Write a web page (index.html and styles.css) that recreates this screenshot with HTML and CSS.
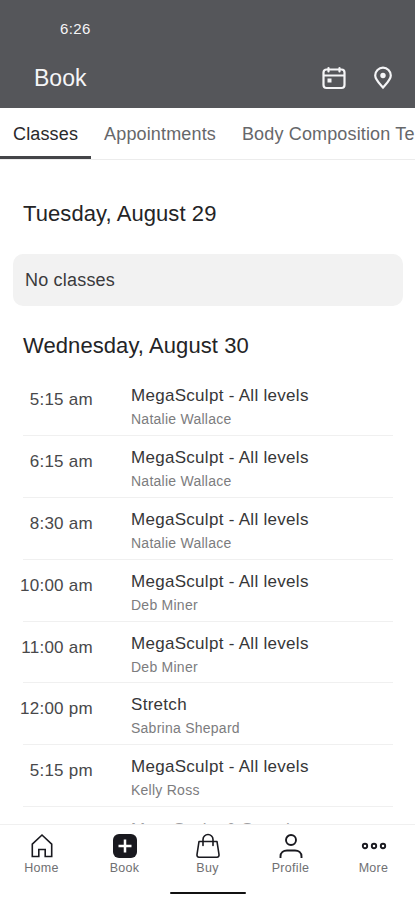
FILE: index.html
```html
<!DOCTYPE html>
<html lang="en">
<head>
  <meta charset="UTF-8" />
  <meta name="viewport" content="width=device-width, initial-scale=1.0"/>
  <title>Book</title>
  <link rel="stylesheet" href="styles.css">
</head>
<body>
  <header class="header">
    <div class="status">6:26</div>
    <div class="title-bar">
      <h1>Book</h1>
      <svg class="calendar" width="24" height="24" viewBox="0 0 24 24" fill="none" stroke="currentColor" stroke-width="2.2" stroke-linecap="round">
        <rect x="1.5" y="3.5" width="21" height="18.5" rx="3"/>
        <path d="M2 9.500h20M6.500 2v3.500M17.500 2v3.500"/>
        <rect x="5.500" y="12.500" width="4" height="4" fill="currentColor" stroke="none"/>
      </svg>
      <svg width="20" height="24" viewBox="0 0 20 24" fill="none" stroke="currentColor" stroke-width="2.2">
        <path d="M10 21.500C7 18 2.200 13.700 2.200 9.500a7.800 7.800 0 0 1 15.600 0c0 4.200-4.800 8.500-7.800 12z"/>
        <circle cx="10" cy="9.500" r="2.700" fill="currentColor" stroke="none"/>
      </svg>
    </div>
  </header>

  <nav class="tabs">
    <a class="tab active">Classes</a>
    <a class="tab">Appointments</a>
    <a class="tab">Body Composition Te</a>
  </nav>

  <main class="schedule">
    <h2>Tuesday, August 29</h2>
    <div class="empty">No classes</div>
    <h2 class="second">Wednesday, August 30</h2>
    <ul class="classes">
      <li><time>5:15 am</time><div><h3>MegaSculpt - All levels</h3><p>Natalie Wallace</p></div></li>
      <li><time>6:15 am</time><div><h3>MegaSculpt - All levels</h3><p>Natalie Wallace</p></div></li>
      <li><time>8:30 am</time><div><h3>MegaSculpt - All levels</h3><p>Natalie Wallace</p></div></li>
      <li><time>10:00 am</time><div><h3>MegaSculpt - All levels</h3><p>Deb Miner</p></div></li>
      <li><time>11:00 am</time><div><h3>MegaSculpt - All levels</h3><p>Deb Miner</p></div></li>
      <li><time>12:00 pm</time><div><h3>Stretch</h3><p>Sabrina Shepard</p></div></li>
      <li><time>5:15 pm</time><div><h3>MegaSculpt - All levels</h3><p>Kelly Ross</p></div></li>
      <li class="faded"><time></time><div><h3>MegaSculpt &amp; Stretch</h3></div></li>
    </ul>
  </main>

  <footer class="bottom">
    <nav class="bottom-nav">
      <a>
        <svg width="26" height="26" viewBox="0 0 26 26" fill="none" stroke="currentColor" stroke-width="1.600">
          <path d="M3.300 11.200 13 2l9.700 9.200v12.300h-6.500v-7H9.800v7H3.300z"/>
        </svg>
        <span>Home</span>
      </a>
      <a>
        <svg width="26" height="26" viewBox="0 0 26 26">
          <rect x="1" y="1" width="24" height="24" rx="6" fill="currentColor"/>
          <path d="M13 6.500v13M6.500 13h13" stroke="#fff" stroke-width="2.500"/>
        </svg>
        <span>Book</span>
      </a>
      <a>
        <svg width="26" height="26" viewBox="0 0 26 26" fill="none" stroke="currentColor" stroke-width="1.600" stroke-linecap="round" stroke-linejoin="round">
          <path d="M4 8.500h18l2 13c.200 1.500-.600 2.700-2 2.700H4c-1.400 0-2.200-1.200-2-2.700z"/>
          <path d="M8 12.500V6.500a5 5 0 0 1 10 0v6"/>
        </svg>
        <span>Buy</span>
      </a>
      <a>
        <svg width="26" height="26" viewBox="0 0 26 26" fill="none" stroke="currentColor" stroke-width="1.900">
          <circle cx="13" cy="7" r="5"/>
          <path d="M2.500 25v-1.500c0-4 3-6 6.500-6h8c3.500 0 6.500 2 6.500 6V25"/>
        </svg>
        <span>Profile</span>
      </a>
      <a>
        <svg width="26" height="26" viewBox="0 0 26 26" fill="none" stroke="currentColor" stroke-width="1.900">
          <circle cx="4" cy="13" r="2.200"/>
          <circle cx="13" cy="13" r="2.200"/>
          <circle cx="22" cy="13" r="2.200"/>
        </svg>
        <span>More</span>
      </a>
    </nav>
    <div class="home-indicator"></div>
  </footer>
</body>
</html>
```
FILE: styles.css
```css
* {
  box-sizing: border-box;
}

body {
  margin: 0;
  height: 900px;
  overflow: hidden;
  display: flex;
  flex-direction: column;
  background: #fff;
  color: #242426;
  font-family: "Liberation Sans", Arial, sans-serif;
}

h1, h2, h3, p, ul {
  margin: 0;
  padding: 0;
  font-weight: normal;
}

.header {
  flex: none;
  height: 108px;
  background: #55565a;
  color: #f5f5f7;
}

.status {
  padding: 19px 0 0 60px;
  font-size: 15px;
  line-height: 20px;
  letter-spacing: 0.4px;
}

.title-bar {
  display: flex;
  align-items: center;
  height: 30px;
  margin-top: 24px;
  padding: 0 22px 0 34px;
}

.title-bar h1 {
  flex: 1;
  font-size: 23px;
  line-height: 30px;
}

.calendar {
  margin-right: 27px;
}

.tabs {
  flex: none;
  display: flex;
  height: 52px;
  overflow: hidden;
  border-bottom: 1px solid #ececec;
  white-space: nowrap;
}

.tab {
  padding: 0 13px;
  font-size: 18px;
  line-height: 52px;
  letter-spacing: 0.15px;
  color: #66676a;
}

.tab.active {
  color: #29292b;
  border-bottom: 3px solid #444548;
}

.schedule {
  flex: 1;
  min-height: 0;
  overflow: hidden;
  padding: 41px 12px 0 13px;
}

.schedule h2 {
  padding-left: 10px;
  font-size: 22px;
  line-height: 26px;
  letter-spacing: 0.080px;
}

.empty {
  height: 52px;
  margin-top: 27px;
  padding-left: 12px;
  background: #f2f2f2;
  border-radius: 10px;
  font-size: 18px;
  line-height: 52px;
  letter-spacing: 0.2px;
  color: #3a3a3c;
}

.schedule .second {
  margin-top: 27px;
}

.classes {
  list-style: none;
  margin: 15px 10px 0;
}

.classes li {
  display: flex;
  height: 61.9px;
  border-bottom: 1px solid #f0f0f0;
}

.classes time {
  width: 74px;
  margin-left: -4px;
  padding-top: 15px;
  flex: none;
  text-align: right;
  font-size: 17px;
  line-height: 22px;
  letter-spacing: 0.27px;
  color: #48484a;
}

.classes li div {
  padding: 11px 0 0 38px;
}

.classes h3 {
  font-size: 17px;
  line-height: 22px;
  letter-spacing: 0.29px;
  color: #363638;
}

.classes p {
  margin-top: 3px;
  font-size: 14px;
  line-height: 18px;
  letter-spacing: 0.25px;
  color: #7c7c7e;
}

.classes .faded h3 {
  padding-top: 1px;
  letter-spacing: 0;
  color: #a0a0a2;
}

.bottom {
  flex: none;
  height: 76px;
  border-top: 1px solid #f0f0f0;
  color: #19191f;
}

.bottom-nav {
  display: grid;
  grid-template-columns: repeat(5, 1fr);
  padding-top: 8px;
}

.bottom-nav a {
  display: flex;
  flex-direction: column;
  align-items: center;
}

.bottom-nav span {
  margin-top: 2px;
  font-size: 12.5px;
  line-height: 15px;
  letter-spacing: 0.3px;
  color: #707072;
}

.home-indicator {
  width: 76px;
  height: 2px;
  margin: 16px auto 0;
  background: #111;
  border-radius: 1px;
}
```
